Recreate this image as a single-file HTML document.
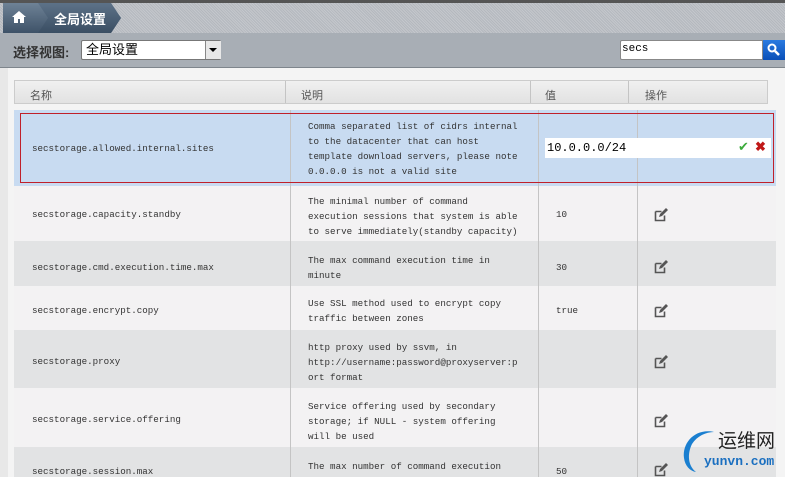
<!DOCTYPE html>
<html style="overflow:hidden;height:477px"><head><meta charset="utf-8"><style>
body{margin:0;width:785px;height:477px;overflow:hidden;background:#f4f4f4;font-family:"Liberation Sans","Noto Sans CJK SC",sans-serif;position:relative}
.top{position:absolute;left:0;top:0;width:785px;height:33px;background:repeating-linear-gradient(45deg,#b4b8be 0 1px,#c4c7cc 1px 2px);border-top:3px solid #555;box-sizing:border-box}
.crumb{position:absolute;left:3px;top:3px;height:30px;width:118px;background:linear-gradient(#6e8296,#3e5268);clip-path:polygon(0 0,108px 0,118px 15px,108px 30px,0 30px)}
.crumb2{position:absolute;left:38px;top:3px;height:30px;width:83px;clip-path:polygon(0 0,73px 0,83px 15px,73px 30px,0 30px,10px 15px);background:linear-gradient(#5d7288,#3a4e63)}
.bar{position:absolute;left:0;top:33px;width:785px;height:34px;background:#a8aeb5;border-bottom:1px solid #7e858c}
.abs{position:absolute}
.mono{font-family:"Liberation Mono","Noto Sans CJK SC",monospace;font-size:9.2px;color:#333}
.hdr{position:absolute;left:14px;top:80px;width:754px;height:24px;background:linear-gradient(#f0f0f0,#e2e2e2);border:1px solid #ccc;box-sizing:border-box;font-size:11px;color:#555}
.hdr span{position:absolute;top:6px}
.row{position:absolute;left:14px;width:762px}
.vl{position:absolute;top:0;bottom:0;width:1px;background:#c4c4c4}
</style></head><body>
<div class="top"></div>
<div class="crumb"></div>
<div class="crumb2"></div>
<svg class="abs" style="left:12px;top:11px" width="14" height="12" viewBox="0 0 14 12"><path d="M7 0L0 6h2v6h4V8h2v4h4V6h2z" fill="#fff"/></svg>
<div class="abs" style="left:54px;top:9px;color:#fff;font-size:13px;font-weight:bold">全局设置</div>
<div class="bar"></div>
<div class="abs" style="left:13px;top:42px;font-size:13px;color:#333;font-weight:bold">选择视图:</div>
<div class="abs" style="left:81px;top:40px;width:140px;height:20px;background:#fff;border:1px solid #777;border-radius:2px;box-sizing:border-box"></div>
<div class="abs" style="left:86px;top:41px;font-size:13px;color:#000;line-height:17px">全局设置</div>
<div class="abs" style="left:205px;top:41px;width:15px;height:18px;background:#e8e8e8;border-left:1px solid #888"></div>
<div class="abs" style="left:209px;top:48px;border-left:4px solid transparent;border-right:4px solid transparent;border-top:4px solid #000;width:0;height:0"></div>
<div class="abs" style="left:620px;top:40px;width:143px;height:20px;background:#fff;border:1px solid #888;border-radius:2px 0 0 2px;box-sizing:border-box"></div>
<div class="abs mono" style="left:622px;top:43px;font-size:11px;color:#000">secs</div>
<div class="abs" style="left:763px;top:40px;width:22px;height:20px;background:linear-gradient(#2a7ae0,#0a50b8)"></div>
<svg class="abs" style="left:767px;top:43px" width="14" height="14"><circle cx="5" cy="5" r="3.5" stroke="#fff" stroke-width="2" fill="none"/><path d="M8 8l4 4" stroke="#fff" stroke-width="2.5"/></svg>
<div class="abs" style="left:0;top:68px;width:8px;height:409px;background:#e8e8e8"></div>
<div class="hdr"><span style="left:15px">名称</span><span style="left:286px">说明</span><span style="left:530px">值</span><span style="left:630px">操作</span>
<div class="vl" style="left:270px"></div><div class="vl" style="left:515px"></div><div class="vl" style="left:613px"></div></div>

<div class="row" style="top:110px;height:76px;background:#c8dbf1"><div class="vl" style="left:276px"></div><div class="vl" style="left:524px"></div><div class="vl" style="left:623px"></div></div>
<div class="abs" style="left:20px;top:113px;width:754px;height:70px;border:1px solid #c0202a;box-sizing:border-box"></div>
<div class="abs mono" style="left:32px;top:143px">secstorage.allowed.internal.sites</div>
<div class="abs mono" style="left:308px;top:119px;line-height:15px">Comma separated list of cidrs internal<br>to the datacenter that can host<br>template download servers, please note<br>0.0.0.0 is not a valid site</div>
<div class="abs" style="left:545px;top:138px;width:226px;height:20px;background:#fff"></div>
<div class="abs mono" style="left:547px;top:141px;font-size:12px;color:#000">10.0.0.0/24</div>
<div class="abs" style="left:738px;top:139px;color:#3cab3c;font-size:13px">✔</div>
<div class="abs" style="left:755px;top:139px;color:#c01818;font-size:13px;font-weight:bold">✖</div>

<div class="row" style="top:186px;height:55px;background:#f3f2f3"></div>
<div class="row" style="top:241px;height:45px;background:#e2e3e4"></div>
<div class="row" style="top:286px;height:44px;background:#f3f2f3"></div>
<div class="row" style="top:330px;height:58px;background:#e2e3e4"></div>
<div class="row" style="top:388px;height:59px;background:#f3f2f3"></div>
<div class="row" style="top:447px;height:30px;background:#e2e3e4"></div>
<div class="row" style="top:186px;height:291px"><div class="vl" style="left:276px"></div><div class="vl" style="left:524px"></div><div class="vl" style="left:623px"></div></div>

<div class="abs mono" style="left:32px;top:209px">secstorage.capacity.standby</div>
<div class="abs mono" style="left:308px;top:194px;line-height:15px">The minimal number of command<br>execution sessions that system is able<br>to serve immediately(standby capacity)</div>
<div class="abs mono" style="left:556px;top:209px">10</div>
<div class="abs mono" style="left:32px;top:262px">secstorage.cmd.execution.time.max</div>
<div class="abs mono" style="left:308px;top:253px;line-height:15px">The max command execution time in<br>minute</div>
<div class="abs mono" style="left:556px;top:262px">30</div>
<div class="abs mono" style="left:32px;top:305px">secstorage.encrypt.copy</div>
<div class="abs mono" style="left:308px;top:296px;line-height:15px">Use SSL method used to encrypt copy<br>traffic between zones</div>
<div class="abs mono" style="left:556px;top:305px">true</div>
<div class="abs mono" style="left:32px;top:356px">secstorage.proxy</div>
<div class="abs mono" style="left:308px;top:340px;line-height:15px">http proxy used by ssvm, in<br>http://username:password@proxyserver:p<br>ort format</div>
<div class="abs mono" style="left:32px;top:414px">secstorage.service.offering</div>
<div class="abs mono" style="left:308px;top:399px;line-height:15px">Service offering used by secondary<br>storage; if NULL - system offering<br>will be used</div>
<div class="abs mono" style="left:32px;top:466px">secstorage.session.max</div>
<div class="abs mono" style="left:308px;top:459px;line-height:15px;height:18px;overflow:hidden">The max number of command execution<br>sessions that a SSVM can handle</div>
<div class="abs mono" style="left:556px;top:466px">50</div>

<svg width="0" height="0" style="position:absolute"><defs><g id="ed"><path d="M1.5 3.5h6M1.5 3.5v9h9v-5" stroke="#555" stroke-width="1.6" fill="none"/><path d="M5 9l1-3 6-6 2 2-6 6z" fill="#555"/></g></defs></svg>
<svg class="abs" style="left:654px;top:208px" width="15" height="14"><use href="#ed"/></svg>
<svg class="abs" style="left:654px;top:260px" width="15" height="14"><use href="#ed"/></svg>
<svg class="abs" style="left:654px;top:304px" width="15" height="14"><use href="#ed"/></svg>
<svg class="abs" style="left:654px;top:355px" width="15" height="14"><use href="#ed"/></svg>
<svg class="abs" style="left:654px;top:414px" width="15" height="14"><use href="#ed"/></svg>
<svg class="abs" style="left:654px;top:463px" width="15" height="14"><use href="#ed"/></svg>

<svg class="abs" style="left:678px;top:428px" width="40" height="46"><path d="M36 4C18 0 4 14 6 30c1 8 6 13 12 14C10 38 9 26 14 16 19 8 28 4 36 4z" fill="#1a7fd0"/></svg>
<div class="abs" style="left:718px;top:431px;font-size:19px;line-height:22px;color:#222">运维网</div>
<div class="abs" style="left:704px;top:454px;font-size:13px;line-height:15px;font-weight:bold;color:#1a6fc0;font-family:'Liberation Mono',monospace">yunvn.com</div>
</body></html>
